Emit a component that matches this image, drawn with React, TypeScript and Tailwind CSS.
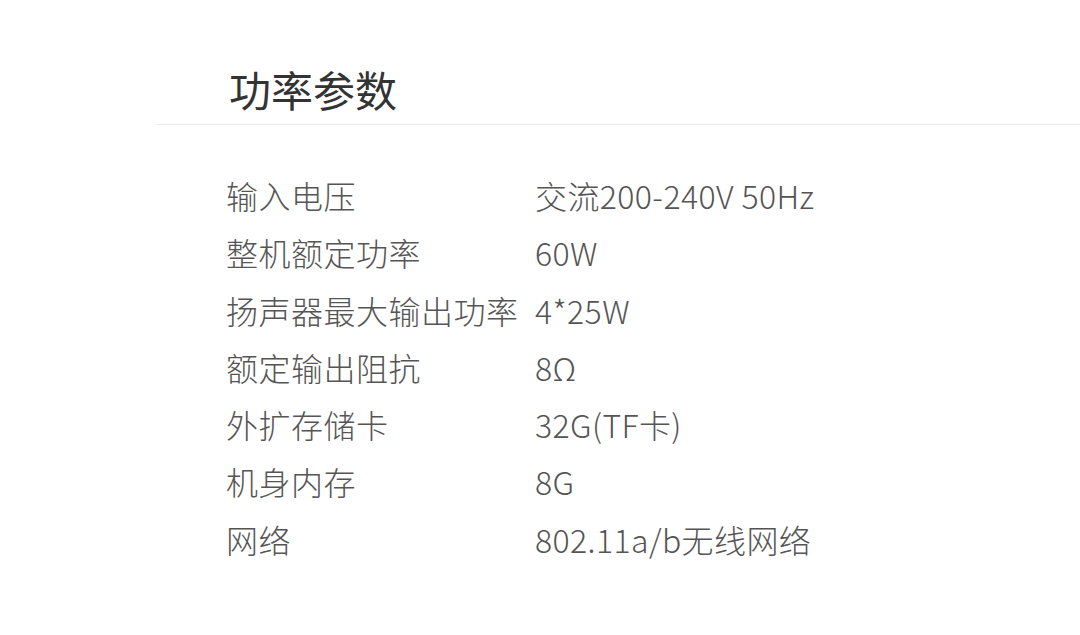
const specs = [
  { label: "输入电压", value: "交流200-240V 50Hz" },
  { label: "整机额定功率", value: "60W" },
  { label: "扬声器最大输出功率", value: "4*25W" },
  { label: "额定输出阻抗", value: "8Ω" },
  { label: "外扩存储卡", value: "32G(TF卡)" },
  { label: "机身内存", value: "8G" },
  { label: "网络", value: "802.11a/b无线网络" },
];

const App = () => {
  return (
    <div className="w-[1080px] h-[635px] bg-white font-['Noto_Sans_CJK_SC',sans-serif] overflow-hidden">
      <div className="ml-[157px] pt-[59px] pb-[5px] border-b border-[#e8e8e8]">
        <h2 className="pl-[72px] text-[42px] leading-[60px] text-[#333]">功率参数</h2>
      </div>
      <div className="mt-[42px] pl-[226px]">
        {specs.map((s) => (
          <div key={s.label} className="flex text-[32px] font-light leading-[57.3px] text-[#555]">
            <span className="w-[309px] tracking-[0.5px]">{s.label}</span>
            <span className="tracking-[0.4px]">{s.value}</span>
          </div>
        ))}
      </div>
    </div>
  );
};

export default App;
